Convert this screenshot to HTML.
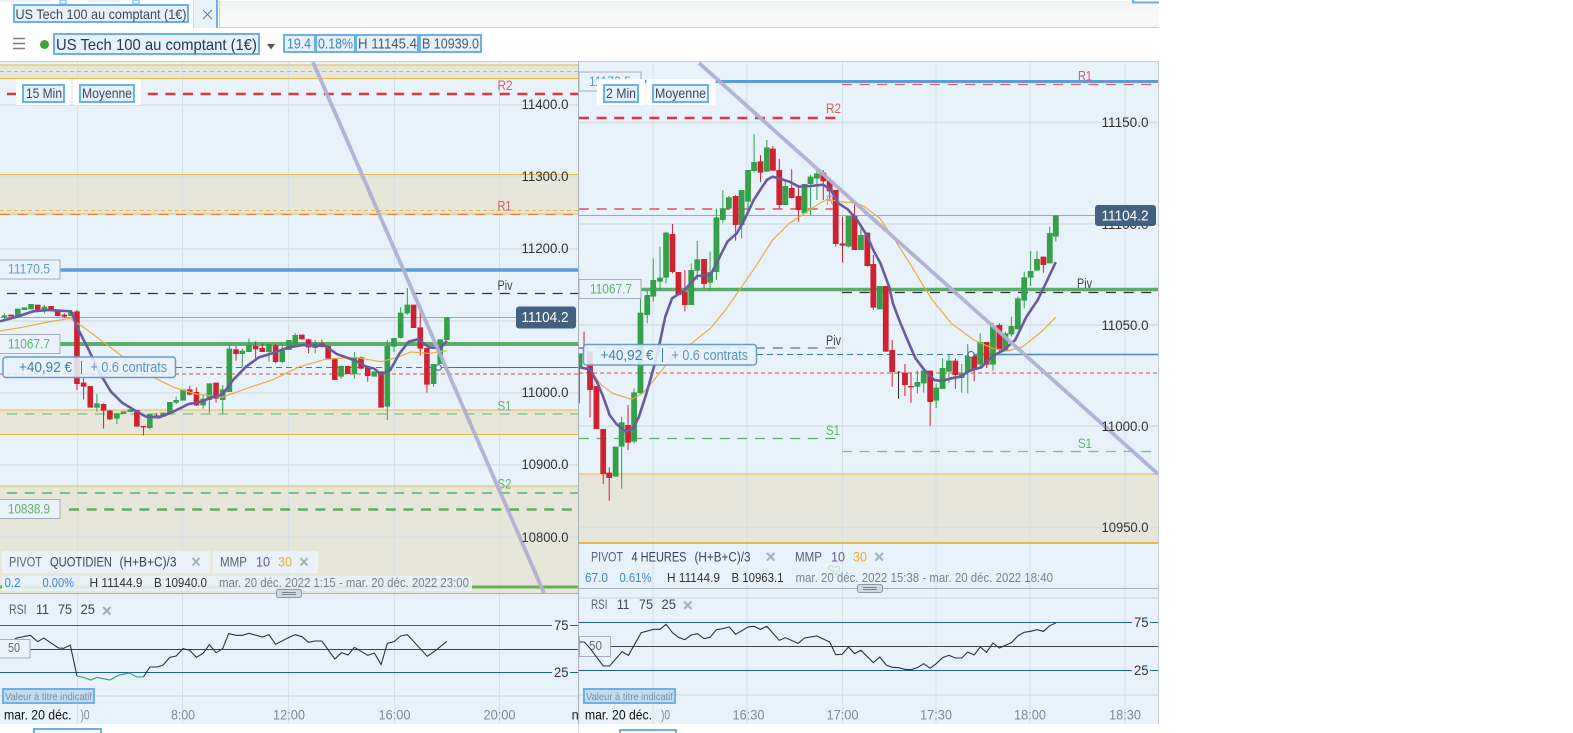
<!DOCTYPE html>
<html lang="fr">
<head>
<meta charset="utf-8">
<title>US Tech 100 au comptant (1€)</title>
<style>
html,body{margin:0;padding:0;background:#fff;width:1573px;height:733px;overflow:hidden}
svg{display:block;font-family:"Liberation Sans",Arial,sans-serif}
.n{vector-effect:non-scaling-stroke;fill:none}
.ax{font-size:14px;fill:#333}
.tm{font-size:14px;fill:#7c8a96}
.lg{font-size:13.5px;fill:#56646f}
.dk{font-size:13.5px;fill:#3a4652}
.sm{font-size:12.5px;fill:#333}
.gr{font-size:12.5px;fill:#76838f}
.bl{font-size:12.5px;fill:#3d85c6}
.x{stroke:#a4aeb8;stroke-width:2;fill:none}
.chip{fill:#e6f1fb;stroke:#6db0e8;stroke-width:2}
.g{stroke:#d6e0e7;stroke-width:1.5;fill:none}
.v{stroke:#d6e0e7;stroke-width:1;fill:none}
.lab{fill:#eaf3fb;stroke:#a4aeba}
</style>
</head>
<body>
<svg width="1573" height="733" viewBox="0 0 1573 733">
<defs>
<linearGradient id="tb" x1="0" y1="0" x2="0" y2="1"><stop offset="0" stop-color="#eff1f3"/><stop offset=".4" stop-color="#f7f8f8"/></linearGradient>
<clipPath id="lc"><rect x="0" y="62" width="578" height="662"/></clipPath>
<clipPath id="rc"><rect x="579" y="62" width="580" height="662"/></clipPath>
</defs>
<rect width="1573" height="733" fill="#fff"/>

<!-- tab bar -->
<rect x="219" y="1" width="940" height="26" fill="url(#tb)"/>
<path d="M219 27.500H1159" stroke="#c8cecd" stroke-width="1"/>
<path d="M219.500 1V27" stroke="#c8cecd" stroke-width="1"/>
<rect x="0" y="0" width="50" height="2" fill="#eaf0f5"/>
<rect x="88" y="0" width="32" height="2" fill="#eaf0f5"/>
<rect x="60" y="0" width="6" height="4" fill="#e6f1fb" stroke="#6db0e8"/>
<rect x="133" y="0" width="6" height="4" fill="#e6f1fb" stroke="#6db0e8"/>
<path d="M1133 0V2.500H1159" stroke="#6db0e8" stroke-width="2" fill="none"/>
<rect x="14" y="5" width="174" height="17" class="chip"/>
<text x="15.500" y="19" font-size="14" fill="#3a4a5c" textLength="171" lengthAdjust="spacingAndGlyphs">US Tech 100 au comptant (1€)</text>
<rect x="193" y="0" width="24" height="28" fill="#e8f2fb"/>
<path d="M193.500 0V28" stroke="#c0dcf4"/>
<path d="M217 0V28" stroke="#6db0e8" stroke-width="2"/>
<path d="M203 10L212 19M212 10L203 19" stroke="#6a7480" stroke-width="1"/>

<!-- toolbar -->
<path d="M13 38.500H25M13 43.500H25M13 48.500H25" stroke="#7c7c88" stroke-width="1.500"/>
<circle cx="44.500" cy="44.500" r="4.500" fill="#3aa53f"/>
<rect x="54" y="34" width="205" height="20" class="chip"/>
<text x="56" y="50" font-size="16" fill="#24384f" textLength="201" lengthAdjust="spacingAndGlyphs">US Tech 100 au comptant (1€)</text>
<path d="M267 44H275L271 49.500Z" fill="#555"/>
<rect x="284" y="35" width="31" height="17" class="chip"/>
<text x="287" y="48.500" font-size="14.500" fill="#3d85c6" textLength="24" lengthAdjust="spacingAndGlyphs">19.4</text>
<rect x="316" y="35" width="39" height="17" class="chip"/>
<text x="318" y="48.500" font-size="14.500" fill="#3d85c6" textLength="35" lengthAdjust="spacingAndGlyphs">0.18%</text>
<rect x="356" y="35" width="62" height="17" class="chip"/>
<text x="358" y="48.500" font-size="14.500" fill="#4f5c68" textLength="59" lengthAdjust="spacingAndGlyphs">H 11145.4</text>
<rect x="420" y="35" width="61" height="17" class="chip"/>
<text x="422" y="48.500" font-size="14.500" fill="#4f5c68" textLength="57" lengthAdjust="spacingAndGlyphs">B 10939.0</text>

<!-- panels -->
<path d="M0 61.500H1159" stroke="#c8d0d6" stroke-width="1"/>
<rect x="0" y="62" width="1158" height="662" fill="#e8f2fb"/>

<!-- LEFT -->
<g clip-path="url(#lc)">
<rect x="0" y="65" width="578" height="13.500" fill="#e6e6da"/>
<rect x="0" y="174" width="578" height="40" fill="#e6e6da"/>
<rect x="0" y="410" width="578" height="24" fill="#e6e6da"/>
<rect x="0" y="486" width="578" height="107" fill="#e6e6da"/>
<path class="v" d="M77.500 62V724M182.500 62V724M288.500 62V724M394.500 62V724M499.500 62V724"/>
<path class="g" d="M0 105H578M0 177H578M0 249H578M0 321H578M0 393H578M0 465H578M0 537H578M0 696H578"/>
<path d="M0 65H578M0 78.500H578M0 174.500H578M0 214H578M0 410H578M0 434.500H578M0 486H578" stroke="#e9b84a" stroke-width="1"/>
<path d="M0 71.500H578M0 210.500H578" stroke="#e9b84a" stroke-width="1" stroke-dasharray="4 3"/>
<path d="M7 94H578" stroke="#dc3545" stroke-width="2.500" stroke-dasharray="10 7.600"/>
<path d="M0 214.500H578" stroke="#e5833a" stroke-width="1.200" stroke-dasharray="10 7.600"/>
<path d="M60 270H578" stroke="#5b9bd8" stroke-width="3.500"/>
<path d="M7 293.500H578" stroke="#333" stroke-width="1.200" stroke-dasharray="10 7.600"/>
<path d="M0 317.500H516" stroke="#9aa8b8" stroke-width="1"/>
<path d="M60 344H578" stroke="#5aae6a" stroke-width="4"/>
<path d="M176 367.500H438" stroke="#3a76b0" stroke-width="1" stroke-dasharray="6 4"/>
<path d="M438 367.500H578" stroke="#3a76b0" stroke-width="1"/>
<path d="M0 374H578" stroke="#e07060" stroke-width="1.200" stroke-dasharray="4 3"/>
<path d="M7 414H578" stroke="#7abf80" stroke-width="1.200" stroke-dasharray="10 7.600"/>
<path d="M7 493H578" stroke="#5aae6a" stroke-width="1.500" stroke-dasharray="10 7.600"/>
<path d="M69 509.500H572" stroke="#5aae6a" stroke-width="2.500" stroke-dasharray="10 7.600"/>
<path d="M0 587H578" stroke="#6aae55" stroke-width="3"/>
<text x="497.500" y="90" font-size="14" fill="#d9596a" textLength="15" lengthAdjust="spacingAndGlyphs">R2</text>
<text x="497.500" y="210.500" font-size="14" fill="#d9596a" textLength="14" lengthAdjust="spacingAndGlyphs">R1</text>
<text x="497.500" y="290" font-size="14" fill="#444" textLength="15" lengthAdjust="spacingAndGlyphs">Piv</text>
<text x="497.500" y="410.500" font-size="14" fill="#62b070" textLength="14" lengthAdjust="spacingAndGlyphs">S1</text>
<text x="497.500" y="488.500" font-size="14" fill="#62b070" textLength="14" lengthAdjust="spacingAndGlyphs">S2</text>

<g transform="matrix(.36995 0 0 .33333 0 250)">
<path class="n" stroke="#34a04a" stroke-width="1" d="M12 190V208M120 165V190M262 432V485M316 488V522M405 492V538M476 440V462M549 435V476M566 400V488M602 405V492M620 286V426M655 296V352M673 265V306M727 280V335M763 280V340M798 250V290M852 270V310M922 346V386M958 306V386M1047 270V510M1065 264V306M1083 172V266M1101 114V194M1172 342V410M1190 268V342M1208 202V270"/>
<path class="n" stroke="#cf2231" stroke-width="1" d="M174 190V204M208 180V420M226 385V448M280 460V536M297 480V510M388 528V556M423 490V505M513 408V436M531 412V468M584 398V458M638 288V332M691 274V330M709 280V306M745 282V340M834 266V310M870 268V292M976 320V358M994 350V395M1136 184V316M1154 294V428"/>
<path class="n" stroke="#34a04a" stroke-width="5.600" d="M12 196V202M48 176V198M66 172V180M84 162V178M120 170V182M192 186V198M262 460V473M316 490V506M334 484V492M352 478V486M405 492V534M441 488V500M459 456V490M476 450V458M495 418V452M549 446V466M566 400V450M602 418V450M620 296V426M655 302V312M673 285V306M727 282V306M763 300V336M781 270V300M798 255V284M852 278V294M922 348V380M958 322V372M1012 364V380M1047 288V470M1065 264V290M1083 188V264M1101 164V190M1172 342V402M1190 268V342M1208 202V270"/>
<path class="n" stroke="#cf2231" stroke-width="5.600" d="M30 194V200M102 164V186M138 168V182M156 178V198M174 194V200M208 184V402M226 398V410M244 408V473M280 462V482M297 482V508M370 480V530M388 528V532M423 496V502M513 418V434M531 426V466M584 398V446M638 298V312M691 288V298M709 294V306M745 286V336M816 254V268M834 268V292M870 280V288M887 288V326M905 324V390M940 348V372M976 322V356M994 350V378M1030 364V473M1118 164V234M1136 232V296M1154 294V404"/>
<path class="n" stroke="#e8ae3c" stroke-width="1.200" d="M0 243L60 232L130 216L190 205L230 235L290 285L350 335L420 385L470 412L530 432L600 442L660 418L740 388L810 350L880 328L960 322L1030 335L1075 322L1110 306L1160 310L1208 302"/>
<path class="n" stroke="#6a5a9e" stroke-width="2.600" d="M0 214L40 202L90 184L130 180L192 184L210 235L240 300L270 370L300 425L330 458L370 485L395 500L430 502L465 487L510 462L545 455L580 438L600 435L630 390L665 350L700 322L735 310L780 292L820 285L880 288L910 312L960 332L990 350L1012 356L1030 374L1055 360L1080 310L1105 275L1130 268L1160 292L1190 295L1208 272"/>
</g>
<circle cx="438.500" cy="367.500" r="2.800" fill="#fff" stroke="#3a76b0" stroke-width="1.200"/>
<path d="M313 62L544 593" stroke="#b1b1d0" stroke-width="3.800" opacity=".95"/>

<text class="ax" x="521.500" y="109" textLength="47" lengthAdjust="spacingAndGlyphs">11400.0</text>
<text class="ax" x="521.500" y="181" textLength="47" lengthAdjust="spacingAndGlyphs">11300.0</text>
<text class="ax" x="521.500" y="253" textLength="47" lengthAdjust="spacingAndGlyphs">11200.0</text>
<text class="ax" x="521.500" y="397" textLength="47" lengthAdjust="spacingAndGlyphs">11000.0</text>
<text class="ax" x="521.500" y="469" textLength="47" lengthAdjust="spacingAndGlyphs">10900.0</text>
<text class="ax" x="521.500" y="542" textLength="47" lengthAdjust="spacingAndGlyphs">10800.0</text>

<rect x="516" y="306.500" width="60" height="22" rx="3" fill="#42607f"/>
<text x="521.500" y="322" font-size="14.500" fill="#fff" textLength="47" lengthAdjust="spacingAndGlyphs">11104.2</text>
<rect x="-3" y="260" width="63" height="19" class="lab"/>
<text x="8" y="273.500" font-size="13.500" fill="#5b9bd8" textLength="42" lengthAdjust="spacingAndGlyphs">11170.5</text>
<rect x="-3" y="334.500" width="63" height="19" class="lab"/>
<text x="8" y="348.500" font-size="13.500" fill="#62b070" textLength="42" lengthAdjust="spacingAndGlyphs">11067.7</text>
<rect x="-3" y="499.500" width="63" height="19" class="lab"/>
<text x="8" y="513.500" font-size="13.500" fill="#62b070" textLength="42" lengthAdjust="spacingAndGlyphs">10838.9</text>

<rect x="3" y="357" width="172.500" height="20.500" rx="3" fill="#e6f1fb" fill-opacity=".88" stroke="#6a9cc8" stroke-width="1.500"/>
<text x="19" y="372" font-size="15" fill="#3f7eb4" textLength="53" lengthAdjust="spacingAndGlyphs">+40,92 €</text>
<path d="M81.500 361V374" stroke="#3f7eb4"/>
<text x="90.500" y="372" font-size="14.500" fill="#5a92c0" textLength="76.500" lengthAdjust="spacingAndGlyphs">+ 0.6 contrats</text>

<rect x="16" y="79" width="55" height="26" rx="2" fill="#fff"/>
<rect x="73" y="79" width="68" height="26" rx="2" fill="#fff"/>
<rect x="23" y="85" width="41" height="17" class="chip"/>
<text x="26" y="98" font-size="13.500" fill="#3a4a5c" textLength="36" lengthAdjust="spacingAndGlyphs">15 Min</text>
<rect x="80" y="85" width="54" height="17" class="chip"/>
<text x="82" y="98" font-size="13.500" fill="#3a4a5c" textLength="50" lengthAdjust="spacingAndGlyphs">Moyenne</text>

<rect x="2" y="551" width="208" height="22" rx="2" fill="#eaf2f9" fill-opacity=".9"/>
<rect x="213" y="551" width="105" height="22" rx="2" fill="#eaf2f9" fill-opacity=".9"/>
<text class="lg" x="9" y="566.500" textLength="33" lengthAdjust="spacingAndGlyphs">PIVOT</text>
<text class="dk" x="50" y="566.500" textLength="62" lengthAdjust="spacingAndGlyphs">QUOTIDIEN</text>
<text class="dk" x="119.500" y="566.500" textLength="57" lengthAdjust="spacingAndGlyphs">(H+B+C)/3</text>
<path class="x" d="M192.500 558L199.500 565.500M199.500 558L192.500 565.500"/>
<text class="lg" x="220" y="566.500" textLength="27" lengthAdjust="spacingAndGlyphs">MMP</text>
<text class="lg" x="256" y="566.500" style="fill:#6a5a9e" textLength="14" lengthAdjust="spacingAndGlyphs">10</text>
<text class="lg" x="278" y="566.500" style="fill:#e8ae3c" textLength="14" lengthAdjust="spacingAndGlyphs">30</text>
<path class="x" d="M300.500 558L307.500 565.500M307.500 558L300.500 565.500"/>
<rect x="2" y="576" width="470" height="15" fill="#eaf2f9" fill-opacity=".88"/>
<text class="bl" x="4.500" y="587" textLength="16" lengthAdjust="spacingAndGlyphs">0.2</text>
<text class="bl" x="42.500" y="587" textLength="31.500" lengthAdjust="spacingAndGlyphs">0.00%</text>
<text class="sm" x="89.500" y="587" textLength="53" lengthAdjust="spacingAndGlyphs">H 11144.9</text>
<text class="sm" x="154" y="587" textLength="53" lengthAdjust="spacingAndGlyphs">B 10940.0</text>
<text class="gr" x="219" y="587" textLength="250" lengthAdjust="spacingAndGlyphs">mar. 20 déc. 2022 1:15 - mar. 20 déc. 2022 23:00</text>

<path d="M0 593.500H578" stroke="#a8b2bb" stroke-width="1"/>
<text class="lg" x="9" y="614" textLength="17.500" lengthAdjust="spacingAndGlyphs">RSI</text>
<text class="dk" x="36" y="614" textLength="13" lengthAdjust="spacingAndGlyphs">11</text>
<text class="dk" x="58" y="614" textLength="14" lengthAdjust="spacingAndGlyphs">75</text>
<text class="dk" x="80.500" y="614" textLength="14.500" lengthAdjust="spacingAndGlyphs">25</text>
<path class="x" d="M103 607L110.500 614.500M110.500 607L103 614.500"/>
<path d="M0 625.500H578M0 672.500H578" stroke="#2060a0" stroke-width="1"/>
<path d="M0 649.500H578" stroke="#444" stroke-width="1"/>
<g transform="matrix(.36995 0 0 .33333 0 490)">
<path class="n" stroke="#2b3340" stroke-width="1.100" d="M0 458L25 458L45 444L82 436L102 455L118 444L158 474L172 475L190 465L208 558"/>
<path class="n" stroke="#3aa053" stroke-width="1.100" d="M208 558L225 562L245 570L262 562L297 570L320 556L350 549L370 561L388 561"/>
<path class="n" stroke="#2b3340" stroke-width="1.100" d="M388 561L405 531L425 531L441 525L459 502L476 498L495 476L513 481L531 502L549 490L566 464L584 488L602 476L618 431L638 436L655 436L673 430L709 441L727 434L745 463L781 442L798 434L816 440L834 457L852 453L870 453L905 507L923 488L941 495L958 472L994 496L1012 489L1030 524L1047 460L1065 455L1083 438L1101 434L1155 499L1172 486L1208 454"/>
</g>
<rect x="-3" y="639.500" width="33" height="18.500" class="lab"/>
<text x="8" y="652" font-size="12.500" fill="#666" textLength="12" lengthAdjust="spacingAndGlyphs">50</text>
<rect x="552" y="617" width="18" height="17" fill="#e8f2fb"/>
<rect x="552" y="664" width="18" height="17" fill="#e8f2fb"/>
<text class="ax" x="554" y="630" textLength="14.500" lengthAdjust="spacingAndGlyphs">75</text>
<text class="ax" x="554" y="677" textLength="14.500" lengthAdjust="spacingAndGlyphs">25</text>
<rect x="3" y="689" width="91" height="14" fill="#c2dcf2" stroke="#6db0e8" stroke-width="2"/>
<text x="5" y="700" font-size="10.500" fill="#7f8c98" textLength="87" lengthAdjust="spacingAndGlyphs">Valeur à titre indicatif</text>

<text x="80.500" y="719.500" font-size="14" fill="#7c8a96" textLength="9" lengthAdjust="spacingAndGlyphs">)0</text>
<text x="4" y="719.500" font-size="14" fill="#111" textLength="67.500" lengthAdjust="spacingAndGlyphs">mar. 20 déc.</text>
<text class="tm" x="171" y="719.500" textLength="24" lengthAdjust="spacingAndGlyphs">8:00</text>
<text class="tm" x="273" y="719.500" textLength="32" lengthAdjust="spacingAndGlyphs">12:00</text>
<text class="tm" x="378.500" y="719.500" textLength="32" lengthAdjust="spacingAndGlyphs">16:00</text>
<text class="tm" x="483.500" y="719.500" textLength="32" lengthAdjust="spacingAndGlyphs">20:00</text>
<text x="571.500" y="719.500" font-size="14" fill="#333">m</text>
<rect x="276.500" y="589.500" width="25" height="8" rx="2" fill="#d0d9e2" stroke="#8a98a8"/>
<path d="M282 592.500H296M282 594.500H296" stroke="#78868f" stroke-width="1"/>
</g>

<!-- RIGHT -->
<g clip-path="url(#rc)">
<rect x="579" y="474" width="580" height="69" fill="#e6e6da"/>
<path class="v" d="M653 62V724M747 62V724M842.500 62V724M936 62V724M1030 62V724M1125 62V724"/>
<path class="g" d="M579 122.500H1158M579 224H1158M579 325H1158M579 426H1158M579 527.500H1158M579 598H1158M579 695H1158"/>
<path d="M579 474H1158" stroke="#e9b84a" stroke-width="1"/>
<path d="M579 543H1158" stroke="#e9b84a" stroke-width="2"/>
<path d="M640 81.500H1158" stroke="#5b9bd8" stroke-width="3"/>
<path d="M842 84.500H1158" stroke="#dc5a60" stroke-width="1.200" stroke-dasharray="10 7.600"/>
<path d="M579 118H842" stroke="#dc3545" stroke-width="2.500" stroke-dasharray="10 7.600"/>
<path d="M579 209H842" stroke="#dc3545" stroke-width="1.200" stroke-dasharray="10 7.600"/>
<path d="M579 215.500H1098" stroke="#9aa8b8" stroke-width="1"/>
<path d="M641 289.500H1158" stroke="#5aae6a" stroke-width="3.500"/>
<path d="M842 292.500H1158" stroke="#333" stroke-width="1.200" stroke-dasharray="10 7.600"/>
<path d="M579 348H842" stroke="#8a949e" stroke-width="1.800" stroke-dasharray="10 7.600"/>
<path d="M757 354.500H971" stroke="#3a76b0" stroke-width="1" stroke-dasharray="6 4"/>
<path d="M971 354.500H1158" stroke="#4f86bd" stroke-width="1.500"/>
<path d="M579 373H1158" stroke="#e07060" stroke-width="1.200" stroke-dasharray="4 3"/>
<path d="M579 438.500H842" stroke="#5aae6a" stroke-width="1.200" stroke-dasharray="10 7.600"/>
<path d="M842 451.500H1158" stroke="#7abf80" stroke-width="1.200" stroke-dasharray="10 7.600"/>
<text x="1078" y="80.500" font-size="14" fill="#d9596a" textLength="14" lengthAdjust="spacingAndGlyphs">R1</text>
<text x="826" y="113" font-size="14" fill="#d9596a" textLength="15" lengthAdjust="spacingAndGlyphs">R2</text>
<text x="826" y="205" font-size="14" fill="#e58a96" textLength="14" lengthAdjust="spacingAndGlyphs">R1</text>
<text x="1077" y="288" font-size="14" fill="#444" textLength="15" lengthAdjust="spacingAndGlyphs">Piv</text>
<text x="826" y="345" font-size="14" fill="#444" textLength="15" lengthAdjust="spacingAndGlyphs">Piv</text>
<text x="826" y="435" font-size="14" fill="#62b070" textLength="14" lengthAdjust="spacingAndGlyphs">S1</text>
<text x="1078" y="448" font-size="14" fill="#62b070" textLength="14" lengthAdjust="spacingAndGlyphs">S1</text>
<text x="827" y="575" font-size="14" fill="#bfe0c8" textLength="14" lengthAdjust="spacingAndGlyphs">S2</text>
<rect x="579" y="72" width="62" height="19" class="lab"/>
<text x="589" y="86" font-size="13.500" fill="#5b9bd8" textLength="42" lengthAdjust="spacingAndGlyphs">11170.5</text>

<g transform="matrix(.37622 0 0 .33333 575 50)">
<path class="n" stroke="#34a04a" stroke-width="1" d="M12 910V1060M124 1100V1316M157 1015V1180M174 734V1030M192 720V820M208 625V755M226 590V720M242 545V700M309 640V765M325 573V690M359 605V722M376 475V690M393 420V520M409 438V480M443 420V565M460 360V490M476 252V368M510 270V365M559 395V465M610 402V490M626 375V496M643 360V450M727 498V592M760 530V600M810 708V778M927 958V1028M910 962V1030M960 1000V1074M977 925V1017M994 915V1000M1028 942V1028M1044 882V1030M1077 850V954M1111 818V962M1144 845V900M1160 800V860M1177 740V838M1194 665V775M1211 603V708M1228 603V662M1262 530V640M1278 496V575M108 1190V1280"/>
<path class="n" stroke="#cf2231" stroke-width="1" d="M24 845V905M40 905V1102M57 1008V1137M75 1137V1302M91 1252V1352M141 1065V1200M259 522V670M275 666V735M292 660V785M343 627V716M427 435V572M493 315V396M526 288V362M543 327V476M576 358V446M594 405V515M660 360V450M677 385V450M693 420V590M711 500V638M743 462V600M777 548V650M793 615V780M826 708V905M843 870V1010M877 942V1038M893 968V1058M944 962V1128M1011 925V1017M1061 915V994M1094 876V954M1128 820V904M1245 620V668"/>
<path class="n" stroke="#222" stroke-width="1" d="M860 966V1046M857 966H865"/>
<path class="n" stroke="#34a04a" stroke-width="5.800" d="M12 910V952M108 1190V1280M124 1117V1190M157 1027V1175M174 788V1030M192 735V795M208 690V740M226 683V695M242 548V683M309 660V765M325 628V662M359 666V698M376 502V666M393 475V510M409 442V476M443 420V525M460 360V455M476 336V363M510 292V365M559 408V465M610 402V490M626 380V402M643 370V386M727 498V590M760 555V600M810 708V778M910 996V1010M927 962V1000M960 1013V1052M977 954V1017M994 932V965M1028 968V984M1044 916V966M1077 876V944M1111 828V944M1144 850V904M1160 828V853M1177 745V838M1194 682V752M1211 663V683M1228 627V662M1262 549V640M1278 496V560"/>
<path class="n" stroke="#cf2231" stroke-width="5.800" d="M40 905V1020M57 1008V1137M75 1137V1272M91 1268V1284M141 1125V1178M259 552V666M275 666V735M292 725V765M343 627V702M427 438V525M493 334V368M526 296V362M543 360V465M576 414V444M594 438V480M660 368V394M677 390V424M693 420V582M711 580V587M743 498V600M777 548V648M793 642V773M826 708V905M843 900V966M877 968V1005M893 1008V1012M944 962V1056M1011 932V975M1061 916V957M1094 876V944M1128 825V900M1245 620V645"/>
<path class="n" stroke="#e8ae3c" stroke-width="1.200" d="M12 952L40 960L70 1005L100 1030L150 1048L180 1030L210 990L260 920L310 880L360 835L400 780L440 715L480 650L525 570L570 520L610 490L650 460L670 448L710 456L745 458L770 470L810 505L850 570L890 640L930 715L950 750L1000 820L1060 870L1110 895L1150 903L1190 890L1240 845L1278 802"/>
<path class="n" stroke="#6a5a9e" stroke-width="2.600" d="M12 952L40 958L60 1000L75 1040L92 1095L110 1122L135 1145L155 1135L170 1100L190 1030L210 950L225 880L240 800L258 745L290 722L325 678L360 675L385 620L405 575L430 550L450 510L475 450L495 415L510 390L525 380L550 388L570 395L595 410L625 408L660 404L680 420L700 460L725 478L750 510L775 555L795 605L812 640L825 680L835 710L845 760L860 805L880 860L905 925L930 962L955 990L975 993L1000 985L1025 980L1050 962L1080 952L1110 918L1140 900L1170 870L1200 800L1230 750L1245 715L1278 636"/>
</g>
<circle cx="971" cy="354.500" r="3" fill="#fff" stroke="#3a76b0" stroke-width="1.200"/>
<path d="M699 63L1158 474" stroke="#b1b1d0" stroke-width="3.800" opacity=".95"/>

<text class="ax" x="1101.500" y="127" textLength="47" lengthAdjust="spacingAndGlyphs">11150.0</text>
<text class="ax" x="1101.500" y="229" textLength="47" lengthAdjust="spacingAndGlyphs">11100.0</text>
<text class="ax" x="1101.500" y="330" textLength="47" lengthAdjust="spacingAndGlyphs">11050.0</text>
<text class="ax" x="1101.500" y="431" textLength="47" lengthAdjust="spacingAndGlyphs">11000.0</text>
<text class="ax" x="1101.500" y="532" textLength="47" lengthAdjust="spacingAndGlyphs">10950.0</text>

<rect x="1095" y="205" width="61" height="21" rx="3" fill="#42607f"/>
<text x="1101.500" y="220.500" font-size="14.500" fill="#fff" textLength="47" lengthAdjust="spacingAndGlyphs">11104.2</text>
<rect x="579" y="279.500" width="62" height="19" class="lab"/>
<text x="590" y="293.500" font-size="13.500" fill="#62b070" textLength="42" lengthAdjust="spacingAndGlyphs">11067.7</text>

<rect x="583.500" y="344.500" width="173" height="20.500" rx="3" fill="#e6f1fb" fill-opacity=".88" stroke="#6a9cc8" stroke-width="1.500"/>
<text x="600.500" y="360" font-size="15" fill="#3f7eb4" textLength="53" lengthAdjust="spacingAndGlyphs">+40,92 €</text>
<path d="M662.500 348V362" stroke="#3f7eb4"/>
<text x="671.500" y="360" font-size="14.500" fill="#5a92c0" textLength="76.500" lengthAdjust="spacingAndGlyphs">+ 0.6 contrats</text>

<rect x="597" y="79" width="48" height="26" rx="2" fill="#fff"/>
<rect x="646.500" y="79" width="69" height="26" rx="2" fill="#fff"/>
<rect x="604" y="85" width="34" height="17" class="chip"/>
<text x="606" y="98" font-size="13.500" fill="#3a4a5c" textLength="30" lengthAdjust="spacingAndGlyphs">2 Min</text>
<rect x="653" y="85" width="55" height="17" class="chip"/>
<text x="655" y="98" font-size="13.500" fill="#3a4a5c" textLength="51" lengthAdjust="spacingAndGlyphs">Moyenne</text>

<text class="lg" x="591" y="561.500" textLength="32" lengthAdjust="spacingAndGlyphs">PIVOT</text>
<text class="dk" x="631.500" y="561.500" textLength="55" lengthAdjust="spacingAndGlyphs">4 HEURES</text>
<text class="dk" x="694.500" y="561.500" textLength="56" lengthAdjust="spacingAndGlyphs">(H+B+C)/3</text>
<path class="x" d="M767 553L774.500 560.500M774.500 553L767 560.500"/>
<text class="lg" x="795" y="561.500" textLength="27" lengthAdjust="spacingAndGlyphs">MMP</text>
<text class="lg" x="831" y="561.500" style="fill:#6a5a9e" textLength="14" lengthAdjust="spacingAndGlyphs">10</text>
<text class="lg" x="853" y="561.500" style="fill:#e8ae3c" textLength="14" lengthAdjust="spacingAndGlyphs">30</text>
<path class="x" d="M875.500 553L883 560.500M883 553L875.500 560.500"/>
<text class="bl" x="585" y="582" textLength="23" lengthAdjust="spacingAndGlyphs">67.0</text>
<text class="bl" x="619.500" y="582" textLength="32" lengthAdjust="spacingAndGlyphs">0.61%</text>
<text class="sm" x="667" y="582" textLength="53" lengthAdjust="spacingAndGlyphs">H 11144.9</text>
<text class="sm" x="731.500" y="582" textLength="52" lengthAdjust="spacingAndGlyphs">B 10963.1</text>
<text class="gr" x="795.500" y="582" textLength="257.500" lengthAdjust="spacingAndGlyphs">mar. 20 déc. 2022 15:38 - mar. 20 déc. 2022 18:40</text>

<path d="M579 588.500H1158" stroke="#a8b2bb" stroke-width="1"/>
<text class="lg" x="591" y="609" textLength="16.500" lengthAdjust="spacingAndGlyphs">RSI</text>
<text class="dk" x="617" y="609" textLength="12.500" lengthAdjust="spacingAndGlyphs">11</text>
<text class="dk" x="639" y="609" textLength="14" lengthAdjust="spacingAndGlyphs">75</text>
<text class="dk" x="661.500" y="609" textLength="14.500" lengthAdjust="spacingAndGlyphs">25</text>
<path class="x" d="M684 601.500L691.500 609M691.500 601.500L684 609"/>
<path d="M579 622.500H1158M579 670.500H1158" stroke="#2060a0" stroke-width="1"/>
<path d="M579 646.500H1158" stroke="#444" stroke-width="1"/>
<rect x="579.500" y="636.500" width="31" height="20" class="lab"/>
<text x="589" y="650" font-size="12.500" fill="#666" textLength="13" lengthAdjust="spacingAndGlyphs">50</text>
<g transform="matrix(.37622 0 0 .33333 575 500)">
<path class="n" stroke="#2b3340" stroke-width="1.100" d="M12 426L25 426L40 445L75 498L92 498L125 455L142 466L176 398L209 388L226 388L242 373L259 398L275 412L292 419L309 405L326 401L343 416L359 412L376 389L393 386L410 381L427 403L460 381L476 379L493 388L510 379L543 421L559 413L593 430L610 414L643 408L677 426L693 464L710 463L727 441L743 461L760 451L793 488L810 471L827 495L843 502L860 503L877 508L893 509L910 503L927 491L944 505L960 491L977 473L994 466L1011 474L1028 474L1044 456L1061 465L1077 441L1094 457L1111 429L1128 444L1160 428L1177 408L1194 397L1211 394L1228 389L1245 394L1262 377L1278 369"/>
</g>
<rect x="1132" y="614" width="18" height="17" fill="#e8f2fb"/>
<rect x="1132" y="662" width="18" height="17" fill="#e8f2fb"/>
<text class="ax" x="1134" y="627" textLength="14.500" lengthAdjust="spacingAndGlyphs">75</text>
<text class="ax" x="1134" y="675" textLength="14.500" lengthAdjust="spacingAndGlyphs">25</text>
<rect x="584" y="689" width="91" height="14" fill="#c2dcf2" stroke="#6db0e8" stroke-width="2"/>
<text x="586" y="700" font-size="10.500" fill="#7f8c98" textLength="87" lengthAdjust="spacingAndGlyphs">Valeur à titre indicatif</text>

<text x="661" y="719.500" font-size="14" fill="#7c8a96" textLength="9" lengthAdjust="spacingAndGlyphs">)0</text>
<text x="585" y="719.500" font-size="14" fill="#111" textLength="67" lengthAdjust="spacingAndGlyphs">mar. 20 déc.</text>
<text class="tm" x="732.500" y="719.500" textLength="32" lengthAdjust="spacingAndGlyphs">16:30</text>
<text class="tm" x="826.500" y="719.500" textLength="32" lengthAdjust="spacingAndGlyphs">17:00</text>
<text class="tm" x="920" y="719.500" textLength="32" lengthAdjust="spacingAndGlyphs">17:30</text>
<text class="tm" x="1014" y="719.500" textLength="32" lengthAdjust="spacingAndGlyphs">18:00</text>
<text class="tm" x="1109" y="719.500" textLength="32" lengthAdjust="spacingAndGlyphs">18:30</text>
<rect x="857.500" y="584.500" width="25" height="8" rx="2" fill="#d0d9e2" stroke="#8a98a8"/>
<path d="M863 587.500H877M863 589.500H877" stroke="#78868f" stroke-width="1"/>
</g>

<path d="M578.500 62V724" stroke="#a8b0b8" stroke-width="1"/>
<path d="M1158.500 62V728" stroke="#c8d0d6" stroke-width="1"/>

<!-- bottom -->
<rect x="0" y="724" width="1159" height="9" fill="#fff"/>
<path d="M578.500 724V733" stroke="#d8dde2" stroke-width="1"/>
<path d="M34 733V729H101V733" fill="none" stroke="#6db0e8" stroke-width="2"/>
<path d="M620 733V730H676V733" fill="none" stroke="#6db0e8" stroke-width="2"/>
</svg>
</body>
</html>
